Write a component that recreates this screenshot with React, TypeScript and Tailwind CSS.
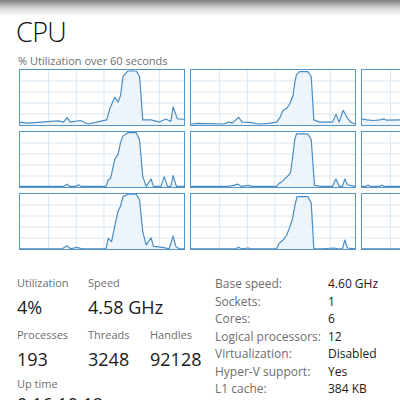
import React from "react";

type Pt = [number, number];

const charts: Pt[][] = [
  // row 1
  [[0,54],[8,55],[31,53.3],[39,52.7],[44,54],[47.7,49.3],[51,54],[61,52.3],[69,56],[81,53.3],[87.7,51.7],[91,40],[96,28.3],[99.3,33.3],[101.7,26.7],[104.3,6.7],[109.3,1],[117.7,1],[121,6.7],[124.3,51.7],[132.7,51.7],[141,54],[147.7,50.7],[152.7,53.3],[155,38.3],[159.3,50.7],[166,51]],
  [[0,56],[6.7,55.3],[33.3,56],[38.3,54],[41.7,55],[48.3,49],[51.7,54],[60,54.3],[68.3,56],[78.3,55.3],[86.7,54],[90,49.3],[93.3,41.7],[96.7,40],[100,35],[103.3,26.7],[105,13.3],[106.7,5],[110,1.7],[118.3,1.7],[121.7,6.7],[124.3,51.7],[130,54],[143.3,54],[146.7,46],[150,54],[154,41.7],[158.3,50],[161.7,54],[166,56]],
  [[0,50.7],[5,51.7],[11.6,52.3],[18.3,51.7],[22.3,50.7],[25,52],[38.3,51.7],[60,52],[80,52.5],[100,52],[130,52.5],[166,52]],
  // row 2
  [[0,56.3],[44.3,56.3],[47.7,54],[50,56.3],[57,56.3],[59.3,54.7],[61.7,56.3],[87,56.3],[89.3,49.7],[91.7,48],[96,28],[99.3,23],[101.7,11.3],[104.3,4],[109.3,0.7],[117.7,0.7],[121,8],[124.3,46.3],[127.7,56.3],[132.7,48.7],[135,56.3],[142.7,56.3],[146,46.3],[149.3,56.3],[152.7,56.3],[155,45.3],[158.3,56.3],[166,56.3]],
  [[0,56.3],[36.7,56.3],[43.3,55.3],[47.3,54],[50.7,56.3],[58.3,55.3],[61.7,56.3],[86.7,56.3],[89.3,53],[91.7,52],[94,49.7],[96,47.3],[98.3,45.3],[100.7,42],[102.7,28],[105,8],[106.7,2],[118.3,2],[121.7,8],[125,55.3],[131.7,56.3],[143.3,56.3],[146.7,48.7],[150,56.3],[153.3,56.3],[155.7,48.7],[158.3,54.7],[166,56.3]],
  [[0,56.3],[4,56.3],[6,55],[8,56.3],[18,56.3],[20,55],[22,56.3],[60,56.3],[166,56.3]],
  // row 3
  [[0,56.7],[42.7,56.7],[47.7,53.7],[51,56.7],[57.7,55.3],[62.7,56.7],[81,56.7],[87,56.7],[89.3,46],[92.7,49.3],[96,32.7],[99.3,17.7],[101.7,12.7],[104.3,2.7],[109.3,0.3],[117.7,0.3],[121,6],[124.3,39.3],[127.7,52.7],[132.7,45.3],[135,54.3],[144.3,55.3],[151,56.7],[155,43.7],[157.7,54.3],[161,56.7],[166,56.7]],
  [[0,56.7],[45,56.7],[48.3,55.3],[50.7,56.7],[58.3,56],[60.7,56.7],[86.7,56.7],[89.3,51],[93.3,47.7],[96.7,42.7],[100,34.3],[102.7,26],[105,12.7],[107.3,2.7],[118.3,2.7],[121.7,9.3],[124.3,56.7],[131.7,56.7],[145,56],[148.3,56.7],[153.3,56.7],[155.7,47.7],[158.3,56],[166,56.7]],
  [[0,56.7],[166,56.7]],
];

const MiniChart = ({ pts }: { pts: Pt[] }) => {
  const line = pts.map(([x, y], i) => `${i ? "L" : "M"}${x} ${y}`).join(" ");
  const area = `${line} L166 57 L0 57 Z`;
  return (
    <div className="w-[166px] h-[57px] border border-[#5595c8] overflow-hidden bg-white">
      <svg viewBox="0 0 166 57" preserveAspectRatio="none" className="block w-full h-full">
        {[11.4, 22.8, 34.2, 45.6].map((y) => (
          <line key={y} x1="0" x2="166" y1={y} y2={y} stroke="#d6e6f2" strokeWidth="1" />
        ))}
        {[29, 57, 85, 113, 141].map((x) => (
          <line key={x} x1={x} x2={x} y1="0" y2="57" stroke="#d6e6f2" strokeWidth="1" />
        ))}
        <path d={area} fill="#eaf2f9" fillOpacity="0.85" />
        <path d={line} fill="none" stroke="#4a8cc2" strokeWidth="1.2" strokeLinejoin="round" />
      </svg>
    </div>
  );
};

const Stat = ({ label, value, gap = "mt-[4px]" }: { label: string; value: string; gap?: string }) => (
  <div className="whitespace-nowrap">
    <div className="text-[11px] leading-[16px] text-[#6e6e6e]">{label}</div>
    <div className={`${gap} text-[18px] leading-[24px] text-[#1a1a1a]`}>{value}</div>
  </div>
);

const specs: [string, string][] = [
  ["Base speed:", "4.60 GHz"],
  ["Sockets:", "1"],
  ["Cores:", "6"],
  ["Logical processors:", "12"],
  ["Virtualization:", "Disabled"],
  ["Hyper-V support:", "Yes"],
  ["L1 cache:", "384 KB"],
];

export default function App() {
  return (
    <div className="w-[400px] h-[400px] overflow-hidden bg-white font-['Open_Sans',sans-serif]">
      <div className="h-[16px] bg-gradient-to-b from-[#7c7c7c] via-[#d4d4d4] to-white" />
      <div className="pl-[16px] text-[27px] leading-[32px] font-light tracking-[-0.6px] text-[#111]">CPU</div>
      <div className="pl-[18px] mt-[6px] text-[11px] leading-[14px] text-[#6e6e6e]">% Utilization over 60 seconds</div>
      <div className="ml-[19px] mt-[1px] grid grid-cols-[166px_166px_166px] gap-[5px]">
        {charts.map((pts, i) => (
          <MiniChart key={i} pts={pts} />
        ))}
      </div>
      <div className="flex mt-[25px]">
        <div className="pl-[17px] w-[215px] flex flex-col">
          <div className="grid grid-cols-[71px_62px]">
            <Stat label="Utilization" value="4%" />
            <Stat label="Speed" value="4.58 GHz" />
          </div>
          <div className="mt-[8px] grid grid-cols-[71px_62px_60px]">
            <Stat label="Processes" value="193" />
            <Stat label="Threads" value="3248" />
            <Stat label="Handles" value="92128" />
          </div>
          <div className="mt-[5px]">
            <Stat label="Up time" value="0:16:10:12" gap="mt-0" />
          </div>
        </div>
        <div className="flex flex-col text-[12px] leading-[17.5px]">
          {specs.map(([k, v]) => (
            <div key={k} className="flex">
              <span className="w-[113px] text-[#6e6e6e]">{k}</span>
              <span className="text-[#1a1a1a]">{v}</span>
            </div>
          ))}
        </div>
      </div>
    </div>
  );
}
